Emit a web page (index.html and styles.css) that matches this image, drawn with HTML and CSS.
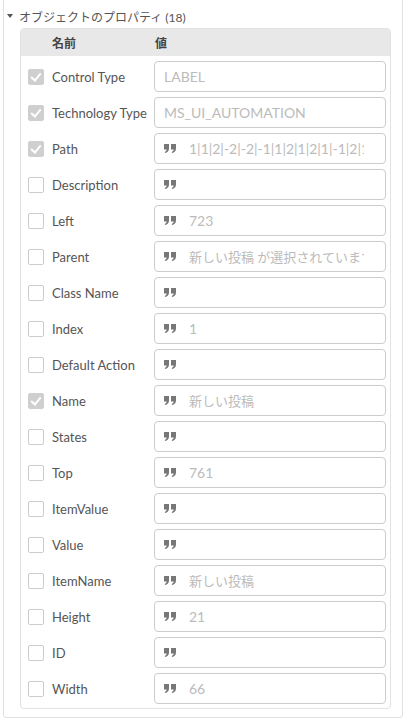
FILE: index.html
```html
<!DOCTYPE html>
<html lang="ja">
<head>
    <meta charset="utf-8">
    <title>オブジェクトのプロパティ</title>
    <link rel="stylesheet" href="styles.css">
</head>
<body>
<div class="panel">
    <div class="panel-title"><span class="caret"></span>オブジェクトのプロパティ (18)</div>

    <div class="props">
        <div class="props-head">
            <span class="col-name">名前</span>
            <span class="col-value">値</span>
        </div>

        <div class="prop-row">
            <div class="prop-name"><span class="check on"></span>Control Type</div>
            <div class="prop-value"><span class="val">LABEL</span></div>
        </div>
        <div class="prop-row">
            <div class="prop-name"><span class="check on"></span>Technology Type</div>
            <div class="prop-value"><span class="val">MS_UI_AUTOMATION</span></div>
        </div>
        <div class="prop-row">
            <div class="prop-name"><span class="check on"></span>Path</div>
            <div class="prop-value"><span class="quote"></span><span class="val">1|1|2|-2|-2|-1|1|2|1|2|1|-1|2|1</span></div>
        </div>
        <div class="prop-row">
            <div class="prop-name"><span class="check"></span>Description</div>
            <div class="prop-value"><span class="quote"></span></div>
        </div>
        <div class="prop-row">
            <div class="prop-name"><span class="check"></span>Left</div>
            <div class="prop-value"><span class="quote"></span><span class="val">723</span></div>
        </div>
        <div class="prop-row">
            <div class="prop-name"><span class="check"></span>Parent</div>
            <div class="prop-value"><span class="quote"></span><span class="val jp">新しい投稿 が選択されています</span></div>
        </div>
        <div class="prop-row">
            <div class="prop-name"><span class="check"></span>Class Name</div>
            <div class="prop-value"><span class="quote"></span></div>
        </div>
        <div class="prop-row">
            <div class="prop-name"><span class="check"></span>Index</div>
            <div class="prop-value"><span class="quote"></span><span class="val">1</span></div>
        </div>
        <div class="prop-row">
            <div class="prop-name"><span class="check"></span>Default Action</div>
            <div class="prop-value"><span class="quote"></span></div>
        </div>
        <div class="prop-row">
            <div class="prop-name"><span class="check on"></span>Name</div>
            <div class="prop-value"><span class="quote"></span><span class="val jp">新しい投稿</span></div>
        </div>
        <div class="prop-row">
            <div class="prop-name"><span class="check"></span>States</div>
            <div class="prop-value"><span class="quote"></span></div>
        </div>
        <div class="prop-row">
            <div class="prop-name"><span class="check"></span>Top</div>
            <div class="prop-value"><span class="quote"></span><span class="val">761</span></div>
        </div>
        <div class="prop-row">
            <div class="prop-name"><span class="check"></span>ItemValue</div>
            <div class="prop-value"><span class="quote"></span></div>
        </div>
        <div class="prop-row">
            <div class="prop-name"><span class="check"></span>Value</div>
            <div class="prop-value"><span class="quote"></span></div>
        </div>
        <div class="prop-row">
            <div class="prop-name"><span class="check"></span>ItemName</div>
            <div class="prop-value"><span class="quote"></span><span class="val jp">新しい投稿</span></div>
        </div>
        <div class="prop-row">
            <div class="prop-name"><span class="check"></span>Height</div>
            <div class="prop-value"><span class="quote"></span><span class="val">21</span></div>
        </div>
        <div class="prop-row">
            <div class="prop-name"><span class="check"></span>ID</div>
            <div class="prop-value"><span class="quote"></span></div>
        </div>
        <div class="prop-row">
            <div class="prop-name"><span class="check"></span>Width</div>
            <div class="prop-value"><span class="quote"></span><span class="val">66</span></div>
        </div>
    </div>
</div>
</body>
</html>
```

FILE: styles.css
```css
body {
    margin: 0;
    background: #fff;
    font-family: Lato, "Noto Sans CJK JP", sans-serif;
    font-size: 13px;
    color: #555;
}

.panel {
    margin: 0 3px 0 3px;
    padding: 0 11px 8px 16px;
    border: 1px solid #e2e2e2;
    border-top: none;
    border-radius: 0 0 4px 4px;
}

.panel-title {
    display: flex;
    align-items: center;
    height: 24px;
    padding-top: 4px;
    margin-left: -13px;
    font-size: 12px;
    color: #555;
}

.caret {
    width: 0; height: 0;
    margin-right: 6px;
    border-left: 3px solid transparent;
    border-right: 3px solid transparent;
    border-top: 4px solid #555;
}

.props {
    border: 1px solid #e2e2e2;
    border-radius: 4px;
    padding-bottom: 4px;
}

.props-head {
    display: flex;
    align-items: center;
    height: 27px;
    background: #e8e8e8;
    border-radius: 3px 3px 0 0;
    font-size: 12px;
    font-weight: bold;
    color: #444;
}
.props-head .col-name { width: 133px; padding-left: 31px; box-sizing: border-box; }
.props-head .col-value { padding-left: 1px; }

.prop-row {
    display: flex;
    align-items: center;
    height: 31px;
    margin-top: 5px;
}

.prop-name {
    flex: none;
    display: flex;
    align-items: center;
    gap: 8px;
    width: 133px;
    padding-left: 7px;
    box-sizing: border-box;
    white-space: nowrap;
    font-size: 13px;
}

.check {
    flex: none;
    width: 14px; height: 14px;
    border: 1px solid #ccc;
    border-radius: 2px;
    background: #fff;
    position: relative;
}
.check.on {
    background: #cfcfcf;
    border-color: #cfcfcf;
}
.check.on::after {
    content: "";
    position: absolute;
    left: 4px; top: 1px;
    width: 4px; height: 8px;
    border: solid #fff;
    border-width: 0 2.5px 2.5px 0;
    transform: rotate(40deg);
}

.prop-value {
    flex: 1;
    min-width: 0;
    display: flex;
    align-items: center;
    height: 31px;
    margin-right: 4px;
    padding: 0 21px 0 9px;
    border: 1px solid #ccc;
    border-radius: 4px;
    box-sizing: border-box;
    white-space: nowrap;
}

.quote {
    flex: none;
    width: 12px; height: 9px;
    margin-right: 13px;
    background: no-repeat center / 12px 9px url("data:image/svg+xml,%3Csvg xmlns='http://www.w3.org/2000/svg' viewBox='0 0 12 9'%3E%3Cpath fill='%23777' d='M0 0h5v4.5c0 2.4-1.6 4-3.8 4.5L.7 7.9c1.2-.4 1.9-1.2 1.9-2.4H0z M7 0h5v4.5c0 2.4-1.6 4-3.8 4.5L7.7 7.9c1.2-.4 1.9-1.2 1.9-2.4H7z'/%3E%3C/svg%3E");
}

.val {
    min-width: 0;
    overflow: hidden;
    color: #bbb;
    font-size: 14px;
}
.val.jp {
    font-size: 13px;
}
```
